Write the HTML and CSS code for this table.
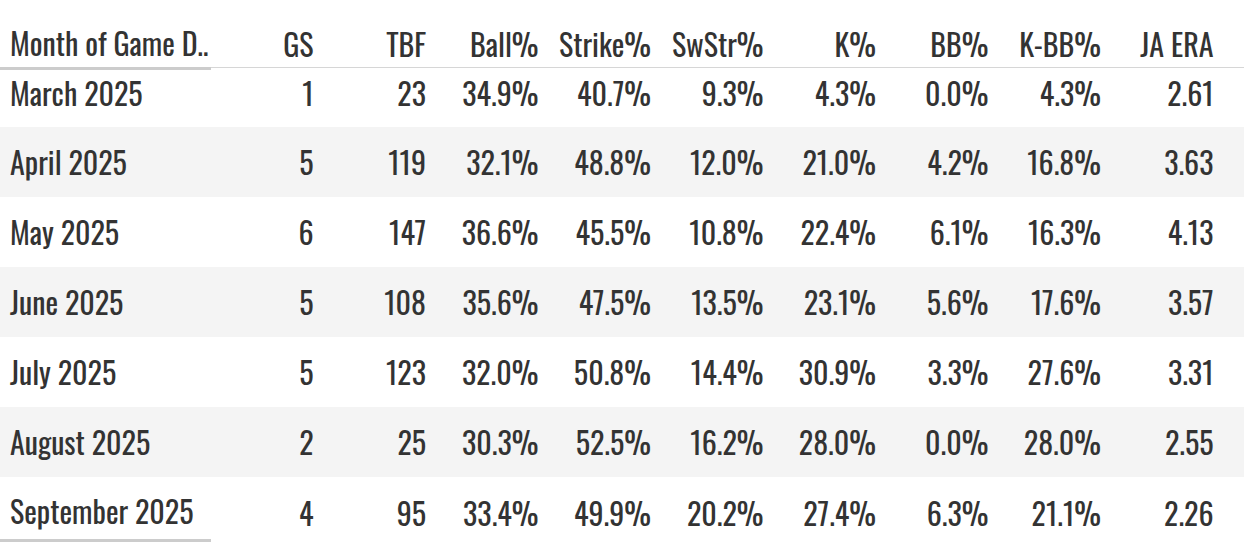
FILE: index.html
```html
<!DOCTYPE html>
<html lang="en">
<head>
<meta charset="utf-8">
<title>Monthly pitching splits</title>
<link rel="stylesheet" href="styles.css">
</head>
<body>
<div class="table">
  <div class="row head">
    <div class="cell name">Month of Game D..</div>
    <div class="cell">GS</div>
    <div class="cell">TBF</div>
    <div class="cell">Ball%</div>
    <div class="cell">Strike%</div>
    <div class="cell">SwStr%</div>
    <div class="cell">K%</div>
    <div class="cell">BB%</div>
    <div class="cell">K-BB%</div>
    <div class="cell">JA ERA</div>
    <div class="cell fill"></div>
  </div>
  <div class="row first">
    <div class="cell name">March 2025</div>
    <div class="cell">1</div><div class="cell">23</div><div class="cell">34.9%</div><div class="cell">40.7%</div><div class="cell">9.3%</div><div class="cell">4.3%</div><div class="cell">0.0%</div><div class="cell">4.3%</div><div class="cell">2.61</div>
  </div>
  <div class="row alt">
    <div class="cell name">April 2025</div>
    <div class="cell">5</div><div class="cell">119</div><div class="cell">32.1%</div><div class="cell">48.8%</div><div class="cell">12.0%</div><div class="cell">21.0%</div><div class="cell">4.2%</div><div class="cell">16.8%</div><div class="cell">3.63</div>
  </div>
  <div class="row">
    <div class="cell name">May 2025</div>
    <div class="cell">6</div><div class="cell">147</div><div class="cell">36.6%</div><div class="cell">45.5%</div><div class="cell">10.8%</div><div class="cell">22.4%</div><div class="cell">6.1%</div><div class="cell">16.3%</div><div class="cell">4.13</div>
  </div>
  <div class="row alt">
    <div class="cell name">June 2025</div>
    <div class="cell">5</div><div class="cell">108</div><div class="cell">35.6%</div><div class="cell">47.5%</div><div class="cell">13.5%</div><div class="cell">23.1%</div><div class="cell">5.6%</div><div class="cell">17.6%</div><div class="cell">3.57</div>
  </div>
  <div class="row">
    <div class="cell name">July 2025</div>
    <div class="cell">5</div><div class="cell">123</div><div class="cell">32.0%</div><div class="cell">50.8%</div><div class="cell">14.4%</div><div class="cell">30.9%</div><div class="cell">3.3%</div><div class="cell">27.6%</div><div class="cell">3.31</div>
  </div>
  <div class="row alt">
    <div class="cell name">August 2025</div>
    <div class="cell">2</div><div class="cell">25</div><div class="cell">30.3%</div><div class="cell">52.5%</div><div class="cell">16.2%</div><div class="cell">28.0%</div><div class="cell">0.0%</div><div class="cell">28.0%</div><div class="cell">2.55</div>
  </div>
  <div class="row last">
    <div class="cell name">September 2025</div>
    <div class="cell">4</div><div class="cell">95</div><div class="cell">33.4%</div><div class="cell">49.9%</div><div class="cell">20.2%</div><div class="cell">27.4%</div><div class="cell">6.3%</div><div class="cell">21.1%</div><div class="cell">2.26</div>
  </div>
</div>
</body>
</html>
```
FILE: styles.css
```css
html, body {
  margin: 0;
  padding: 0;
  background: #ffffff;
}

.table {
  width: 1244px;
  font-family: "Oswald", "Roboto Condensed", sans-serif;
  color: #333333;
  font-weight: 400;
}

.row {
  display: flex;
  align-items: flex-start;
}

.cell {
  box-sizing: border-box;
  width: 112.5px;
  flex: none;
  padding-right: 10px;
  text-align: right;
  white-space: nowrap;
  font-size: 30px;
  line-height: 1;
  height: 70px;
  display: flex;
  align-items: center;
  justify-content: flex-end;
}

.cell.name {
  width: 211px;
  padding-left: 10px;
  padding-right: 0;
  justify-content: flex-start;
  text-align: left;
}

/* header */
.head .cell {
  height: 68px;
  padding-top: 20px;
  border-bottom: 1px solid #d6d6d6;
}
.head .cell.name {
  height: 70px;
  padding-bottom: 2px;
  border-bottom: 3px solid #cccccc;
}
.head .cell.fill {
  flex: 1;
  width: auto;
  padding: 0;
}

/* body rows */
.row.alt {
  background: #f4f4f4;
}

.row.first .cell {
  height: 57px;
  padding-bottom: 12px;
}

.row.last .cell {
  height: 62px;
  padding-top: 9px;
}
.row.last .cell.name {
  height: 65px;
  padding-bottom: 3px;
  border-bottom: 3px solid #cccccc;
}
```
